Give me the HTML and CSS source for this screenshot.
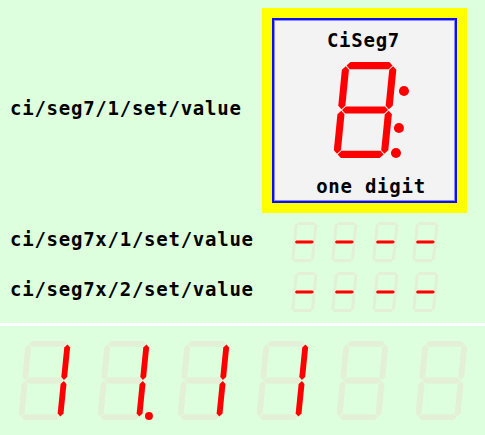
FILE: index.html
```html
<!DOCTYPE html>
<html>
<head>
<meta charset="utf-8">
<link rel="stylesheet" href="styles.css">
</head>
<body>
<svg class="defs" width="0" height="0" aria-hidden="true">
  <defs>
    <path id="sa" d="M0.7,0 L4.3,-3.6 L43.7,-3.6 L47.3,0 L43.7,3.6 L4.3,3.6 Z"/>
    <path id="sb" d="M48,0.7 L51.6,4.3 L51.6,40.7 L48,44.3 L44.4,40.7 L44.4,4.3 Z"/>
    <path id="sc" d="M48,45.7 L51.6,49.3 L51.6,85.7 L48,89.3 L44.4,85.7 L44.4,49.3 Z"/>
    <path id="sd" d="M0.7,90 L4.3,86.4 L43.7,86.4 L47.3,90 L43.7,93.6 L4.3,93.6 Z"/>
    <path id="se" d="M0,45.7 L3.6,49.3 L3.6,85.7 L0,89.3 L-3.6,85.7 L-3.6,49.3 Z"/>
    <path id="sf" d="M0,0.7 L3.6,4.3 L3.6,40.7 L0,44.3 L-3.6,40.7 L-3.6,4.3 Z"/>
    <path id="sg" d="M0.7,45 L4.3,41.4 L43.7,41.4 L47.3,45 L43.7,48.6 L4.3,48.6 Z"/>
    <g id="all8">
      <use href="#sa"/><use href="#sb"/><use href="#sc"/><use href="#sd"/>
      <use href="#se"/><use href="#sf"/><use href="#sg"/>
    </g>
  </defs>
</svg>

<div class="row row-top">
  <div class="label">ci/seg7/1/set/value</div>
  <div class="frame">
    <div class="panel">
      <div class="title">CiSeg7</div>
      <svg class="bigdigit" viewBox="-4 -3.6 77 97.2">
        <g transform="matrix(1 0 -0.1 1 9 0)"><use href="#all8" class="on"/></g>
        <circle class="on" cx="67.9" cy="25.8" r="5.1"/>
        <circle class="on" cx="62.8" cy="63.2" r="5.1"/>
        <circle class="on" cx="59.8" cy="88.5" r="5.1"/>
      </svg>
      <div class="caption">one digit</div>
    </div>
  </div>
</div>

<div class="row row-small">
  <div class="label label-wide">ci/seg7x/1/set/value</div>
  <div class="digits-small">
    <svg class="dig-s" viewBox="-4 -3.6 65 97.2"><g transform="matrix(1 0 -0.1 1 9 0)"><use href="#all8" class="off"/><use href="#sg" class="on"/></g></svg>
    <svg class="dig-s" viewBox="-4 -3.6 65 97.2"><g transform="matrix(1 0 -0.1 1 9 0)"><use href="#all8" class="off"/><use href="#sg" class="on"/></g></svg>
    <svg class="dig-s" viewBox="-4 -3.6 65 97.2"><g transform="matrix(1 0 -0.1 1 9 0)"><use href="#all8" class="off"/><use href="#sg" class="on"/></g></svg>
    <svg class="dig-s" viewBox="-4 -3.6 65 97.2"><g transform="matrix(1 0 -0.1 1 9 0)"><use href="#all8" class="off"/><use href="#sg" class="on"/></g></svg>
  </div>
</div>

<div class="row row-small">
  <div class="label label-wide">ci/seg7x/2/set/value</div>
  <div class="digits-small">
    <svg class="dig-s" viewBox="-4 -3.6 65 97.2"><g transform="matrix(1 0 -0.1 1 9 0)"><use href="#all8" class="off"/><use href="#sg" class="on"/></g></svg>
    <svg class="dig-s" viewBox="-4 -3.6 65 97.2"><g transform="matrix(1 0 -0.1 1 9 0)"><use href="#all8" class="off"/><use href="#sg" class="on"/></g></svg>
    <svg class="dig-s" viewBox="-4 -3.6 65 97.2"><g transform="matrix(1 0 -0.1 1 9 0)"><use href="#all8" class="off"/><use href="#sg" class="on"/></g></svg>
    <svg class="dig-s" viewBox="-4 -3.6 65 97.2"><g transform="matrix(1 0 -0.1 1 9 0)"><use href="#all8" class="off"/><use href="#sg" class="on"/></g></svg>
  </div>
</div>

<div class="sep"></div>

<div class="digits-big">
  <svg class="dig-l" viewBox="-4 -3.6 65 97.2"><g transform="matrix(1 0 -0.1 1 9 0)"><use href="#all8" class="off"/><use href="#sb" class="on"/><use href="#sc" class="on"/></g></svg>
  <svg class="dig-l" viewBox="-4 -3.6 65 97.2"><g transform="matrix(1 0 -0.1 1 9 0)"><use href="#all8" class="off"/><use href="#sb" class="on"/><use href="#sc" class="on"/></g><circle class="on" cx="60" cy="88.6" r="4.9"/></svg>
  <svg class="dig-l" viewBox="-4 -3.6 65 97.2"><g transform="matrix(1 0 -0.1 1 9 0)"><use href="#all8" class="off"/><use href="#sb" class="on"/><use href="#sc" class="on"/></g></svg>
  <svg class="dig-l" viewBox="-4 -3.6 65 97.2"><g transform="matrix(1 0 -0.1 1 9 0)"><use href="#all8" class="off"/><use href="#sb" class="on"/><use href="#sc" class="on"/></g></svg>
  <svg class="dig-l" viewBox="-4 -3.6 65 97.2"><g transform="matrix(1 0 -0.1 1 9 0)"><use href="#all8" class="off"/></g></svg>
  <svg class="dig-l" viewBox="-4 -3.6 65 97.2"><g transform="matrix(1 0 -0.1 1 9 0)"><use href="#all8" class="off"/></g></svg>
</div>
</body>
</html>
```
FILE: styles.css
```css
html, body {
  margin: 0;
  padding: 0;
}
body {
  background: #ddffdd;
  width: 485px;
  height: 435px;
  overflow: hidden;
  font-family: "DejaVu Sans Mono", "Liberation Mono", monospace;
  font-weight: bold;
  font-size: 19px;
  letter-spacing: 0.75px;
  line-height: 22px;
  color: #000;
}
.defs {
  position: absolute;
  width: 0;
  height: 0;
}
.off { fill: #e3efd6; }
.on { fill: #ff0000; }
svg { overflow: visible; display: block; }

.row {
  display: flex;
  align-items: center;
  padding-left: 10px;
}
.label {
  width: 252px;
  margin-bottom: 6px;
  white-space: nowrap;
}
.label-wide { width: 281px; }

.row-top { padding-top: 8px; }
.frame {
  width: 205px;
  height: 205px;
  box-sizing: border-box;
  border: 10px solid #ffff00;
}
.panel {
  height: 100%;
  box-sizing: border-box;
  border: 2px solid #1010ee;
  box-shadow: inset 0 0 0 1px #8a8aff;
  background: #f3f3f3;
  display: flex;
  flex-direction: column;
  padding-top: 9px;
}
.title {
  text-align: center;
  padding-right: 2px;
}
.bigdigit {
  width: 76px;
  height: 96px;
  margin-top: 11px;
  margin-left: 59px;
}
.caption {
  margin-top: 17px;
  text-align: center;
  padding-left: 13px;
}

.row-small { height: 50px; }
.row-small:first-of-type { margin-top: 0; }
.row-top + .row-small { margin-top: 4px; }
.digits-small {
  display: flex;
  gap: 13.6px;
}
.dig-s {
  width: 26.7px;
  height: 40px;
}

.sep {
  height: 3px;
  background: #ffffff;
  margin-top: 6px;
}
.digits-big {
  display: flex;
  gap: 26.6px;
  padding: 15px 0 0 18px;
}
.dig-l {
  width: 52.8px;
  height: 79px;
}
```
